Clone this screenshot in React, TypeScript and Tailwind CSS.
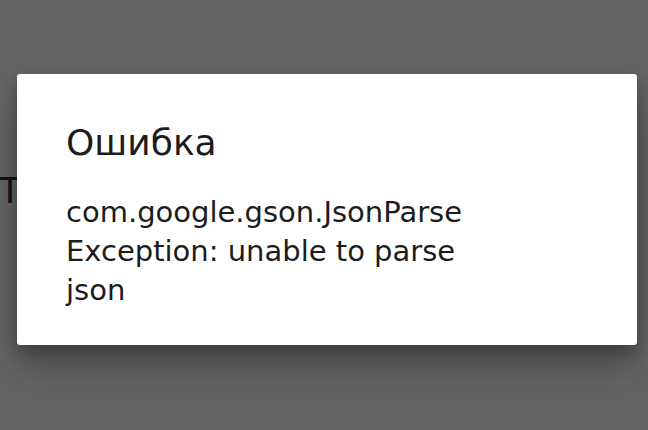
export default function App() {
  return (
    <div className="relative h-[430px] w-[648px] overflow-hidden bg-[#656565] font-['DejaVu_Sans',sans-serif]">
      {/* page content behind the scrim */}
      <span className="absolute left-[-1px] top-[173px] text-[36px] leading-[36px] text-[#141414]">Т</span>

      <div className="relative pl-[17px] pt-[74px]">
        <div className="w-[620px] rounded-[3px] bg-white pl-[49px] pr-6 pt-[47px] pb-[35px] shadow-[0_20px_40px_rgba(0,0,0,0.3),0_8px_14px_rgba(0,0,0,0.2)]">
          <h1 className="text-[36px] leading-[44px] text-[#1c1c1c]">Ошибка</h1>
          <p className="mt-[28px] text-[29px] leading-[39px] text-[#1c1c1c]">
            com.google.gson.JsonParse
            <br />
            Exception: unable to parse
            <br />
            json
          </p>
        </div>
      </div>
    </div>
  );
}
